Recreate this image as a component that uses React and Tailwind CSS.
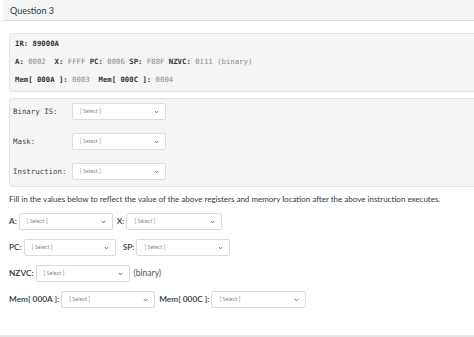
import React from 'react';

const mono = { fontFamily: '"DejaVu Sans Mono", "Liberation Mono", monospace' };

const Select = ({ w = 'w-[94px]' }) => (
    <div className={`${w} h-[17px] shrink-0 flex items-center justify-between bg-white border border-[#dcdcdc] rounded-[2px] pl-[7px] pr-[6px]`}>
        <span className="text-[5.5px] text-[#8a8a8a] leading-none">[ Select ]</span>
        <svg width="5" height="4" viewBox="0 0 10 8" className="mt-[1px]">
            <path d="M1.5 2 L5 5.5 L8.5 2" fill="none" stroke="#555" strokeWidth="1.8" />
        </svg>
    </div>
);

const Label = ({ children, className = '' }) => (
    <span className={`text-[8.3px] font-semibold text-[#2d3b45] leading-none whitespace-nowrap ${className}`}>{children}</span>
);

const App = () => {
    return (
        <div className="w-[474px] h-[337px] overflow-hidden bg-white leading-none" style={{ fontFamily: 'Lato, "Liberation Sans", sans-serif' }}>
            <div className="w-[520px] ml-[3px]">
                {/* Header */}
                <div className="h-[21px] bg-[#f5f5f5] border-b border-[#dcdcdc] flex items-center pl-[7px]">
                    <span className="text-[9px] text-[#2d3b45]">Question 3</span>
                </div>

                <div className="pl-[6px] pt-[12px]">
                    {/* Registers box */}
                    <div className="h-[59px] bg-[#f5f5f5] border border-[#e3e3e3] rounded-[3px] pl-[5px] pt-[1px] text-[7.3px] leading-[18px] text-[#8a8a8a]" style={mono}>
                        <div className="font-bold text-[#333]">IR: 89000A</div>
                        <div className="whitespace-pre">
                            <b className="text-[#333]">A:</b> 0002  <b className="text-[#333]">X:</b> FFFF <b className="text-[#333]">PC:</b> 0006 <b className="text-[#333]">SP:</b> FB8F <b className="text-[#333]">NZVC:</b> 0111 (binary)
                        </div>
                        <div className="whitespace-pre">
                            <b className="text-[#333]">Mem[ 000A ]:</b> 0003  <b className="text-[#333]">Mem[ 000C ]:</b> 0004
                        </div>
                    </div>

                    {/* Decode box */}
                    <div className="mt-[6px] h-[89px] bg-[#f5f5f5] border border-[#e3e3e3] rounded-[3px] pl-[3px] pt-[4px] flex flex-col gap-[13px]">
                        {['Binary IS:', 'Mask:', 'Instruction:'].map((l) => (
                            <div key={l} className="flex items-center">
                                <span className="w-[59px] text-[7.4px] text-[#444]" style={mono}>{l}</span>
                                <Select />
                            </div>
                        ))}
                    </div>

                    <p className="mt-[7px] text-[8px] text-[#2d3b45] leading-[10px] whitespace-nowrap">
                        Fill in the values below to reflect the value of the above registers and memory location after the above instruction executes.
                    </p>

                    <div className="mt-[9px] flex flex-col gap-[9px]">
                        <div className="flex items-center gap-[2px]">
                            <Label>A:</Label>
                            <Select />
                            <Label className="ml-[2px]">X:</Label>
                            <Select w="w-[96px]" />
                        </div>
                        <div className="flex items-center gap-[2px]">
                            <Label>PC:</Label>
                            <Select w="w-[92px]" />
                            <Label className="ml-[5px]">SP:</Label>
                            <Select />
                        </div>
                        <div className="flex items-center gap-[2px]">
                            <Label>NZVC:</Label>
                            <Select />
                            <span className="ml-[2px] text-[8.5px] text-[#555] leading-none">(binary)</span>
                        </div>
                        <div className="flex items-center gap-[2px]">
                            <Label>Mem[ 000A ]:</Label>
                            <Select />
                            <Label className="ml-[2px]">Mem[ 000C ]:</Label>
                            <Select w="w-[95px]" />
                        </div>
                    </div>
                </div>
            </div>
            <div className="mt-[27px] h-[2px] bg-[#e3e3e3]" />
        </div>
    );
};

export default App;
